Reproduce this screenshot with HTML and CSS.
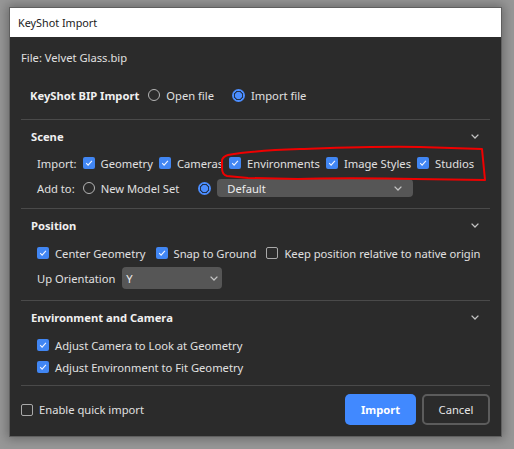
FILE: index.html
```html
<!DOCTYPE html>
<html>
<head>
<meta charset="utf-8">
<title>KeyShot Import</title>
<link rel="stylesheet" href="styles.css">
</head>
<body>
<div class="dialog">
  <div class="titlebar">KeyShot Import</div>
  <div class="file">File: Velvet Glass.bip</div>
  <div class="bip">
    <span class="bip-label">KeyShot BIP Import</span>
    <label class="opt"><span class="radio"></span>Open file</label>
    <label class="opt wide"><span class="radio on"></span>Import file</label>
  </div>

  <div class="sections">
    <div class="section scene">
      <div class="sec-head"><span>Scene</span><svg class="chev" viewBox="0 0 8 5"><path d="M0.6 0.6L4 4L7.4 0.6"/></svg></div>
      <div class="row tight">
        <span class="lbl">Import:</span>
        <label class="opt"><span class="cb on"><svg viewBox="0 0 12 12"><path d="M3.2 6.2L5.1 8.1L8.9 3.9"/></svg></span>Geometry</label>
        <label class="opt"><span class="cb on"><svg viewBox="0 0 12 12"><path d="M3.2 6.2L5.1 8.1L8.9 3.9"/></svg></span>Cameras</label>
        <label class="opt"><span class="cb on"><svg viewBox="0 0 12 12"><path d="M3.2 6.2L5.1 8.1L8.9 3.9"/></svg></span>Environments</label>
        <label class="opt"><span class="cb on"><svg viewBox="0 0 12 12"><path d="M3.2 6.2L5.1 8.1L8.9 3.9"/></svg></span>Image Styles</label>
        <label class="opt"><span class="cb on"><svg viewBox="0 0 12 12"><path d="M3.2 6.2L5.1 8.1L8.9 3.9"/></svg></span>Studios</label>
      </div>
      <div class="row add">
        <span class="lbl">Add to:</span>
        <label class="opt"><span class="radio"></span>New Model Set</label>
        <span class="radio on sel-radio"></span>
        <div class="select sel-default"><span>Default</span><svg class="chev" viewBox="0 0 8 5"><path d="M0.6 0.6L4 4L7.4 0.6"/></svg></div>
      </div>
    </div>

    <div class="section position">
      <div class="sec-head"><span>Position</span><svg class="chev" viewBox="0 0 8 5"><path d="M0.6 0.6L4 4L7.4 0.6"/></svg></div>
      <div class="row loose first">
        <label class="opt"><span class="cb on"><svg viewBox="0 0 12 12"><path d="M3.2 6.2L5.1 8.1L8.9 3.9"/></svg></span>Center Geometry</label>
        <label class="opt"><span class="cb on"><svg viewBox="0 0 12 12"><path d="M3.2 6.2L5.1 8.1L8.9 3.9"/></svg></span>Snap to Ground</label>
        <label class="opt"><span class="cb"></span>Keep position relative to native origin</label>
      </div>
      <div class="row orient">
        <span class="lbl">Up Orientation</span>
        <div class="select sel-y"><span>Y</span><svg class="chev" viewBox="0 0 8 5"><path d="M0.6 0.6L4 4L7.4 0.6"/></svg></div>
      </div>
    </div>

    <div class="section env">
      <div class="sec-head"><span>Environment and Camera</span><svg class="chev" viewBox="0 0 8 5"><path d="M0.6 0.6L4 4L7.4 0.6"/></svg></div>
      <div class="row first">
        <label class="opt"><span class="cb on"><svg viewBox="0 0 12 12"><path d="M3.2 6.2L5.1 8.1L8.9 3.9"/></svg></span>Adjust Camera to Look at Geometry</label>
      </div>
      <div class="row">
        <label class="opt"><span class="cb on"><svg viewBox="0 0 12 12"><path d="M3.2 6.2L5.1 8.1L8.9 3.9"/></svg></span>Adjust Environment to Fit Geometry</label>
      </div>
    </div>
  </div>

  <div class="footer">
    <label class="opt"><span class="cb"></span>Enable quick import</label>
    <div class="buttons">
      <button class="btn primary">Import</button>
      <button class="btn">Cancel</button>
    </div>
  </div>
</div>

<svg class="annotation" viewBox="0 0 514 449" width="514" height="449">
  <path d="M228 155 C 245 152 270 150 300 149 C 330 148 380 146 420 147 L 482 149 L 485 180 L 415 179 C 380 178 320 178 298 179 L 248 178 L 227 176 C 223 175 222 172 222 168 L 222 160 C 223 157 225 156 228 155 Z"/>
</svg>
</body>
</html>
```

FILE: styles.css
```css
* { box-sizing: border-box; }

body {
  margin: 0;
  width: 514px;
  height: 449px;
  overflow: hidden;
  position: relative;
  background: #979797;
  font-family: "Noto Sans", "Open Sans", sans-serif;
  font-size: 11.2px;
  color: #e0e0e0;
}

.dialog {
  margin: 7px 0 0 9px;
  width: 493px;
  height: 430px;
  border: 1px solid #5f5f5f;
  background: #2b2b2b;
  box-shadow: 0 0 10px 2px rgba(0, 0, 0, 0.3);
  display: flex;
  flex-direction: column;
}

.titlebar {
  flex: none;
  height: 29px;
  background: #ffffff;
  color: #1a1a1a;
  padding-left: 8px;
  display: flex;
  align-items: center;
  font-size: 10.8px;
}

.file {
  height: 20px;
  margin-top: 10px;
  padding-left: 11px;
  display: flex;
  align-items: center;
}

.bip {
  height: 20px;
  margin-top: 18px;
  padding-left: 20px;
  display: flex;
  align-items: center;
}

.bip-label {
  font-weight: 700;
  color: #f0f0f0;
  margin-right: 9px;
}

.opt {
  display: flex;
  align-items: center;
  gap: 6px;
  white-space: nowrap;
}

.bip .wide { margin-left: 18px; }

.radio {
  width: 12px;
  height: 12px;
  border-radius: 50%;
  border: 1.5px solid #b4b4b4;
  flex: none;
}

.radio.on {
  border: none;
  width: 13px;
  height: 13px;
  background: radial-gradient(circle, #4b8dff 0 3.3px, #22324d 3.9px 4.5px, #4b8dff 5px);
}

.cb {
  width: 12px;
  height: 12px;
  border-radius: 2px;
  border: 1.5px solid #a9a9a9;
  flex: none;
  display: flex;
}

.cb.on {
  border: none;
  background: #4186f3;
}

.cb svg {
  width: 12px;
  height: 12px;
}

.cb svg path {
  fill: none;
  stroke: #f2f6ff;
  stroke-width: 1.1;
}

.sections {
  margin: 14px 11px 0;
}

.section {
  border-top: 1px solid #4a4a4a;
}

.scene { padding-bottom: 9px; }
.position { padding-bottom: 11px; }
.env { padding-bottom: 7px; }

.sec-head {
  height: 32px;
  padding: 0 11px 0 10px;
  display: flex;
  align-items: center;
  justify-content: space-between;
  font-weight: 700;
  color: #f0f0f0;
}

.chev {
  width: 8px;
  height: 5px;
  flex: none;
}

.chev path {
  fill: none;
  stroke: #c4c4c4;
  stroke-width: 1.3;
}

.row {
  height: 22px;
  padding-left: 16px;
  display: flex;
  align-items: center;
}

.row.first { margin-top: 1px; }

.tight { gap: 6px; }

.loose { gap: 10px; }

.add { margin-top: 3px; }
.add .lbl { margin-right: 8px; }
.add .sel-radio { margin-left: 19px; margin-right: 6px; }

.select {
  height: 18px;
  border-radius: 4px;
  background: #565656;
  display: flex;
  align-items: center;
  justify-content: space-between;
  padding: 0 11px 0 10px;
  color: #ececec;
}

.sel-default { width: 196px; }

.orient { margin-top: 3px; }
.orient .lbl { margin-right: 7px; }

.sel-y {
  width: 100px;
  height: 22px;
  padding: 0 4px 0 4px;
}

.footer {
  margin: 0 11px;
  border-top: 1px solid #4a4a4a;
  padding: 8px 0 11px;
  display: flex;
  align-items: center;
  justify-content: space-between;
}

.buttons {
  display: flex;
  gap: 6px;
}

.btn {
  font-family: inherit;
  font-size: 11.2px;
  height: 31px;
  border-radius: 5px;
  border: 2px solid #5c5c5c;
  background: #2b2b2b;
  color: #e6e6e6;
  padding: 0;
  width: 68px;
}

.btn.primary {
  width: 71px;
  border: none;
  background: #4189ff;
  color: #ffffff;
  font-weight: 700;
}

.annotation {
  position: absolute;
  left: 0;
  top: 0;
  pointer-events: none;
}

.annotation path {
  fill: none;
  stroke: #f00000;
  stroke-width: 2;
  stroke-linejoin: round;
}
```
